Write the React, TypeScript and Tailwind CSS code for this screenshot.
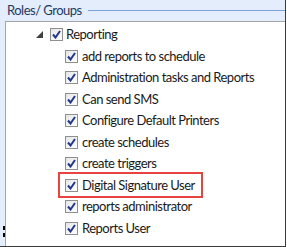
import React from "react";

const children = [
  "add reports to schedule",
  "Administration tasks and Reports",
  "Can send SMS",
  "Configure Default Printers",
  "create schedules",
  "create triggers",
  "Digital Signature User",
  "reports administrator",
  "Reports User",
];

function Check() {
  return (
    <span className="flex h-[13px] w-[13px] shrink-0 items-center justify-center border border-[#8f8f8f] bg-gradient-to-br from-[#e6e6e6] to-[#ffffff]">
      <svg width="9" height="9" viewBox="0 0 9 9">
        <path d="M1 4.5 L3.5 7.5 L8 1" fill="none" stroke="#21378d" strokeWidth="2" />
      </svg>
    </span>
  );
}

export default function App() {
  return (
    <div
      className="flex h-[247px] w-[286px] flex-col border-r border-b border-[#3a3a3a] bg-white text-[#1a1a1a]"
      style={{ fontFamily: 'Lato, "Open Sans", sans-serif' }}
    >
      {/* Group header */}
      <div className="flex h-[21px] shrink-0 items-center bg-[#e3edfc] pl-[7px]">
        <span className="whitespace-nowrap text-[13px] leading-none tracking-[-0.5px] text-[#1e3a62]">Roles/ Groups</span>
        <div className="ml-[6px] h-px flex-1 bg-[#7aa3dc]"></div>
      </div>

      <div className="flex flex-1">
        <div className="relative w-[5px] shrink-0 bg-[#e3edfc]">
          <span className="absolute left-[3px] top-[205px] h-[4px] w-[2px] bg-black"></span>
          <span className="absolute left-[3px] top-[212px] h-[4px] w-[2px] bg-black"></span>
        </div>
        <div className="flex-1 border-l border-t border-[#a6a6a6] pt-[2px] text-[13px] tracking-[-0.5px]">
          <div className="flex h-[21.5px] items-center pl-[30px]">
            <svg width="7" height="7" viewBox="0 0 7 7" className="mr-[7px]">
              <path d="M7 0 L7 7 L0 7 Z" fill="#404040" />
            </svg>
            <Check />
            <span className="ml-[3px] whitespace-nowrap leading-none">Reporting</span>
          </div>
          {children.map((c) => (
            <div key={c} className="flex h-[21.5px] items-center pl-[59px]">
              {c === "Digital Signature User" ? (
                <div className="-ml-[7px] flex h-[26px] items-center border-2 border-[#e8433f] pl-[5px] pr-[6px]">
                  <Check />
                  <span className="ml-[4px] whitespace-nowrap leading-none">{c}</span>
                </div>
              ) : (
                <>
                  <Check />
                  <span className="ml-[4px] whitespace-nowrap leading-none">{c}</span>
                </>
              )}
            </div>
          ))}
        </div>
      </div>
    </div>
  );
}
